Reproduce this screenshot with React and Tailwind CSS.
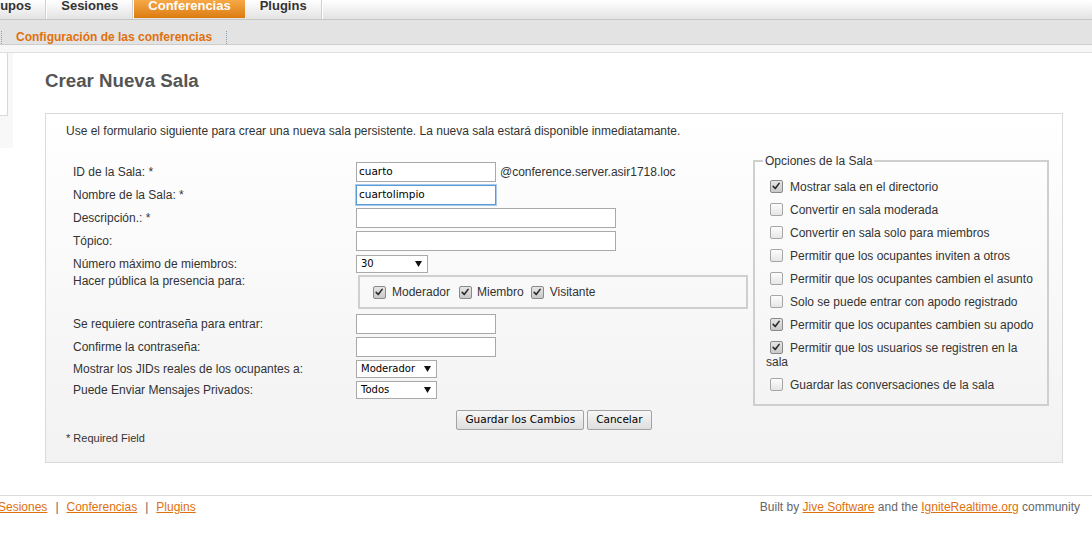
import React from 'react';

const ARIAL = { fontFamily: '"Liberation Sans", Arial, sans-serif' };

function Check({ checked, className = '' }) {
  return (
    <span
      className={`inline-block h-[13px] w-[13px] shrink-0 rounded-[2px] border align-[-2px] ${className} ${
        checked ? 'border-[#8a8a8a] bg-linear-to-b from-[#e6e6e6] to-[#c9c9c9]' : 'border-[#a6a6a6] bg-linear-to-b from-[#fdfdfd] to-[#e6e6e6]'
      }`}
    >
      {checked && (
        <svg viewBox="0 0 13 13" className="block h-[11px] w-[11px]">
          <path d="M2.6 6.4 L5 8.9 L9.6 2.8" fill="none" stroke="#2b2b2b" strokeWidth="1.9" strokeLinecap="round" strokeLinejoin="round" />
        </svg>
      )}
    </span>
  );
}

function Input({ w, value, focused }) {
  return (
    <div
      className={`flex h-[20px] items-center bg-white pl-[2px] font-['DejaVu_Sans'] text-[10.5px] text-black ${w} ${
        focused ? 'border border-[#5b9bd5] shadow-[0_0_0_1px_#a9c9ee]' : 'border border-[#a9a9a9]'
      }`}
    >
      {value}
    </div>
  );
}

function Select({ w, value }) {
  return (
    <div className={`flex h-[18px] items-center justify-between border border-[#a9a9a9] bg-white pl-[4px] pr-[5px] font-['DejaVu_Sans'] text-[10px] text-black ${w}`}>
      <span>{value}</span>
      <svg viewBox="0 0 7 6" className="h-[6px] w-[7px]">
        <path d="M0 0 H7 L3.5 6 Z" fill="#111" />
      </svg>
    </div>
  );
}

function Row({ label, h = 'h-[23px]', children }) {
  return (
    <div className={`flex items-center ${h}`}>
      <div className="w-[290px] shrink-0 pl-[7px]">{label}</div>
      {children}
    </div>
  );
}

const options = [
  ['Mostrar sala en el directorio', true],
  ['Convertir en sala moderada', false],
  ['Convertir en sala solo para miembros', false],
  ['Permitir que los ocupantes inviten a otros', false],
  ['Permitir que los ocupantes cambien el asunto', false],
  ['Solo se puede entrar con apodo registrado', false],
  ['Permitir que los ocupantes cambien su apodo', true],
  ['Permitir que los usuarios se registren en la sala', true],
  ['Guardar las conversaciones de la sala', false],
];

export default function App() {
  return (
    <div style={ARIAL} className="min-h-[544px] w-full overflow-hidden bg-white text-[12px] text-[#333]">
      {/* main tabs */}
      <div className="flex h-[20px] overflow-hidden border-b border-[#c6c6c6] bg-linear-to-b from-white to-[#e3e3e3] text-[13px] font-bold leading-[12px]">
        <div className="-ml-[29px] h-full border-r border-[#d0d0d0] px-[14px] shadow-[1px_0_0_#fff]">Grupos</div>
        <div className="ml-[1px] h-full border-r border-[#d0d0d0] px-[14px] shadow-[1px_0_0_#fff]">Sesiones</div>
        <div className="ml-[1px] h-[18px] bg-linear-to-b from-[#f6a946] to-[#dc7c0b] px-[14px] text-white">Conferencias</div>
        <div className="ml-[1px] h-full border-r border-[#d0d0d0] px-[14px] shadow-[1px_0_0_#fff]">Plugins</div>
      </div>

      {/* sub tabs */}
      <div className="flex h-[25px] items-end border-b border-[#cdcdcd] bg-[#e3e3e3]">
        <div className="ml-[1px] h-[13px] border-x border-dotted border-[#8e9aab] px-[14px] text-[12px] font-bold leading-[13px] text-[#e0700d]">
          Configuración de las conferencias
        </div>
      </div>
      <div className="h-[8px] border-b border-[#e0e0e0] bg-[#f7f7f7]" />

      {/* body */}
      <div className="flex">
        <div className="w-[13px] shrink-0">
          <div className="h-[95px] bg-[#f8f8f8]">
            <div className="h-[63px] w-[8px] border-r border-b border-[#d8d8d8] bg-white" />
          </div>
        </div>

        <div className="flex-1 pl-[32px] pr-[29px]">
          <h1 className="mt-[17px] text-[18.7px] font-bold leading-[22px] text-[#555]">Crear Nueva Sala</h1>

          <div className="mt-[21px] border border-[#dadada] bg-linear-to-b from-white to-[#f2f2f2] pl-[20px] pr-[13px] pt-[10px] pb-[17px]">
            <p className="leading-[14px]">
              Use el formulario siguiente para crear una nueva sala persistente. La nueva sala estará disponible inmediatamante.
            </p>

            <div className="mt-[12px] flex items-start">
              {/* left column */}
              <div className="w-[687px] shrink-0 pt-[10px]">
                <Row label="ID de la Sala: *">
                  <Input w="w-[140px]" value="cuarto" />
                  <span className="ml-[4px]">@conference.server.asir1718.loc</span>
                </Row>
                <Row label="Nombre de la Sala: *">
                  <Input w="w-[140px]" value="cuartolimpio" focused />
                </Row>
                <Row label="Descripción.: *">
                  <Input w="w-[260px]" />
                </Row>
                <Row label="Tópico:">
                  <Input w="w-[260px]" />
                </Row>
                <Row label="Número máximo de miembros:">
                  <Select w="w-[72px]" value="30" />
                </Row>
                <div className="flex h-[37px] items-start">
                  <div className="-mt-[1px] w-[290px] shrink-0 pl-[7px] leading-[14px]">Hacer pública la presencia para:</div>
                  <div className="ml-[2px] flex h-[34px] w-[390px] items-center border-2 border-[#cfcfcf] pl-[13px]">
                    <Check checked />
                    <span className="ml-[6px]">Moderador</span>
                    <Check checked className="ml-[9px]" />
                    <span className="ml-[5px]">Miembro</span>
                    <Check checked className="ml-[7px]" />
                    <span className="ml-[6px]">Visitante</span>
                  </div>
                </div>
                <Row label="Se requiere contraseña para entrar:">
                  <Input w="w-[140px]" />
                </Row>
                <Row label="Confirme la contraseña:">
                  <Input w="w-[140px]" />
                </Row>
                <Row label="Mostrar los JIDs reales de los ocupantes a:" h="h-[21px]">
                  <Select w="w-[81px]" value="Moderador" />
                </Row>
                <Row label="Puede Enviar Mensajes Privados:" h="h-[21px]">
                  <Select w="w-[81px]" value="Todos" />
                </Row>
              </div>

              {/* right column */}
              <div className="pt-[4px]">
                <fieldset className="w-[296px] border-2 border-[#cfcfcf] px-[11px] pt-[7px] pb-[8px]">
                  <legend className="ml-[-3px] px-[2px] leading-[14px]">Opciones de la Sala</legend>
                  {options.map(([text, on]) => (
                    <div key={text} className="pt-[5px] pb-[4px] leading-[14px]">
                      <Check checked={on} className="ml-[4px] mr-[7px]" />
                      {text}
                    </div>
                  ))}
                </fieldset>
              </div>
            </div>

            <div className="-ml-[20px] -mr-[13px] mt-[4px] flex justify-center gap-[3px] font-['DejaVu_Sans'] text-[10.5px] text-black">
              <button className="h-[20px] rounded-[2px] border border-[#a3a3a3] bg-linear-to-b from-[#f7f7f7] to-[#dedede] px-[8px]">
                Guardar los Cambios
              </button>
              <button className="h-[20px] rounded-[2px] border border-[#a3a3a3] bg-linear-to-b from-[#f7f7f7] to-[#dedede] px-[8px]">
                Cancelar
              </button>
            </div>

            <p className="mt-[2px] text-[11px] leading-[13px]">* Required Field</p>
          </div>
        </div>
      </div>

      {/* footer */}
      <div className="mt-[32px] flex justify-between border-t border-[#dcdcdc] pt-[4px] pr-[12px] leading-[14px]">
        <div className="-ml-[2px] flex text-[#666]">
          <a className="text-[#e0700d] underline">Sesiones</a>
          <span className="mx-[8px]">|</span>
          <a className="text-[#e0700d] underline">Conferencias</a>
          <span className="mx-[8px]">|</span>
          <a className="text-[#e0700d] underline">Plugins</a>
        </div>
        <div className="text-[#666]">
          Built by <a className="text-[#e0700d] underline">Jive Software</a> and the{' '}
          <a className="text-[#e0700d] underline">IgniteRealtime.org</a> community
        </div>
      </div>
    </div>
  );
}
